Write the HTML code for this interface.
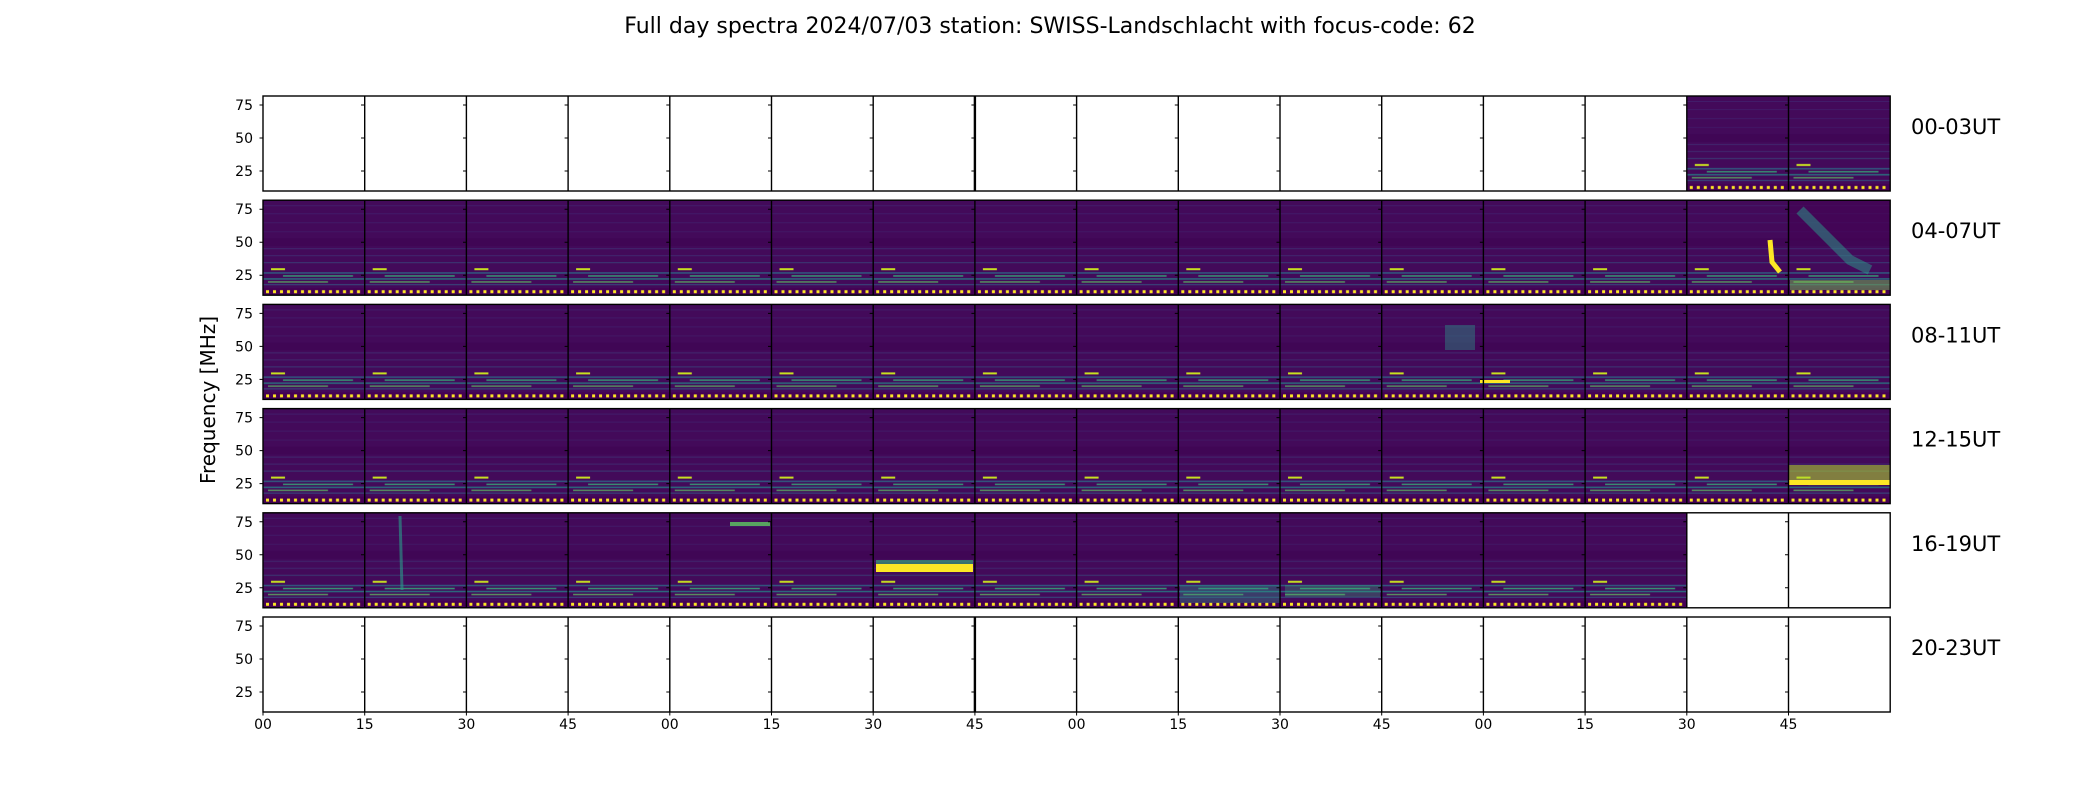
<!DOCTYPE html>
<html><head><meta charset="utf-8"><style>
html,body{margin:0;padding:0;background:#fff}
svg{display:block}
text{font-family:"DejaVu Sans","Liberation Sans",sans-serif;fill:#000}
</style></head><body>
<svg width="2100" height="800" viewBox="0 0 2100 800" xmlns="http://www.w3.org/2000/svg">
<defs>
<pattern id="sp" patternUnits="userSpaceOnUse" x="263" y="96" width="101.7" height="104.2">
 <rect width="101.7" height="95" fill="#430a5a"/>
 <rect y="5" width="101.7" height="1" fill="#3f3d85" opacity="0.35"/>
 <rect y="13" width="101.7" height="1" fill="#3f3d85" opacity="0.3"/>
 <rect y="22" width="101.7" height="1" fill="#3f3d85" opacity="0.3"/>
 <rect y="31" width="101.7" height="1" fill="#3f3d85" opacity="0.25"/>
 <rect y="38" width="101.7" height="8" fill="#3e0452" opacity="0.6"/>
 <rect y="48" width="101.7" height="1" fill="#3b528b" opacity="0.4"/>
 <rect y="55" width="101.7" height="1" fill="#3b528b" opacity="0.4"/>
 <rect y="62" width="101.7" height="1" fill="#31688e" opacity="0.5"/>
 <rect x="8" y="68" width="14" height="2" fill="#c8e020"/>
 <rect y="72" width="101.7" height="1.5" fill="#2a788e" opacity="0.7"/>
 <rect x="20" y="75" width="70" height="1.5" fill="#35b779" opacity="0.8"/>
 <rect y="78" width="101.7" height="1.5" fill="#21918c" opacity="0.7"/>
 <rect x="5" y="81" width="60" height="1.5" fill="#5ec962" opacity="0.7"/>
 <rect y="84" width="101.7" height="1" fill="#31688e" opacity="0.7"/>
 <rect y="88" width="101.7" height="7" fill="#440154"/>
 <rect x="3" y="90" width="3" height="3" fill="#fde725"/><rect x="10" y="90" width="3" height="3" fill="#fde725"/>
 <rect x="17" y="90" width="3" height="3" fill="#fde725"/><rect x="24" y="90" width="3" height="3" fill="#fde725"/>
 <rect x="31" y="90" width="3" height="3" fill="#fde725"/><rect x="38" y="90" width="3" height="3" fill="#fde725"/>
 <rect x="45" y="90" width="3" height="3" fill="#fde725"/><rect x="52" y="90" width="3" height="3" fill="#fde725"/>
 <rect x="59" y="90" width="3" height="3" fill="#fde725"/><rect x="66" y="90" width="3" height="3" fill="#fde725"/>
 <rect x="73" y="90" width="3" height="3" fill="#fde725"/><rect x="80" y="90" width="3" height="3" fill="#fde725"/>
 <rect x="87" y="90" width="3" height="3" fill="#fde725"/><rect x="94" y="90" width="3" height="3" fill="#fde725"/>
</pattern>
</defs>

<text x="1050" y="33" font-size="22" text-anchor="middle">Full day spectra 2024/07/03 station: SWISS-Landschlacht with focus-code: 62</text>
<text transform="translate(215,400) rotate(-90)" font-size="20" text-anchor="middle">Frequency [MHz]</text>

<rect x="1686.8" y="96" width="203.4" height="95" fill="url(#sp)"/>
<rect x="263" y="200.2" width="1627.2" height="95" fill="url(#sp)"/>
<rect x="263" y="304.4" width="1627.2" height="95" fill="url(#sp)"/>
<rect x="263" y="408.6" width="1627.2" height="95" fill="url(#sp)"/>
<rect x="263" y="512.8" width="1423.8" height="95" fill="url(#sp)"/>

<rect x="1788.5" y="200.2" width="101.7" height="40" fill="#440154" opacity="0.6"/>
<path d="M1800 210 L1830 240 L1850 260 L1870 270" stroke="#2a9d8a" stroke-width="10" fill="none" opacity="0.5"/>
<path d="M1770 240 L1772 262 L1780 272" stroke="#fde725" stroke-width="5" fill="none"/>
<rect x="1790" y="280" width="100" height="10" fill="#7ad151" opacity="0.45"/>
<rect x="1788.5" y="465" width="101.7" height="20" fill="#b5de2b" opacity="0.55"/>
<rect x="1788.5" y="480" width="101.7" height="5" fill="#fde725"/>
<rect x="1445" y="325" width="30" height="25" fill="#2a9d8a" opacity="0.4"/>
<rect x="876" y="564" width="97" height="8" fill="#fde725"/>
<rect x="876" y="560" width="97" height="4" fill="#35b779" opacity="0.6"/>
<rect x="730" y="522" width="40" height="4" fill="#5ec962" opacity="0.8"/>
<rect x="1480" y="380" width="30" height="3" fill="#fde725"/>
<path d="M400 516 L402 590" stroke="#2a9d8a" stroke-width="3" opacity="0.6"/>
<rect x="1180" y="585" width="100" height="18" fill="#2a9d8a" opacity="0.35"/>
<rect x="1285" y="585" width="95" height="12" fill="#35b779" opacity="0.3"/>

<g fill="none" stroke="#000" stroke-width="1.4">
 <rect x="263" y="96" width="1627.2" height="95"/>
 <rect x="263" y="200.2" width="1627.2" height="95"/>
 <rect x="263" y="304.4" width="1627.2" height="95"/>
 <rect x="263" y="408.6" width="1627.2" height="95"/>
 <rect x="263" y="512.8" width="1627.2" height="95"/>
 <rect x="263" y="617" width="1627.2" height="95"/>
</g>
<g stroke="#000" stroke-width="1.4">
 <path id="cl" d="M364.7 96V191M466.4 96V191M568.1 96V191M669.8 96V191M771.5 96V191M873.2 96V191M974.9 96V191M1076.6 96V191M1178.3 96V191M1280 96V191M1381.7 96V191M1483.4 96V191M1585.1 96V191M1686.8 96V191M1788.5 96V191"/>
 <use href="#cl" y="104.2"/><use href="#cl" y="208.4"/><use href="#cl" y="312.6"/><use href="#cl" y="416.8"/><use href="#cl" y="521"/>
 <path d="M974.9 96V191M974.9 617V712" stroke-width="2.4"/>
</g>

<g stroke="#000" stroke-width="1">
 <path id="tk" d="M259.5 105H263M259.5 138H263M259.5 171H263"/>
 <path id="tkr" d="M361 105H364.7M361 138H364.7M361 171H364.7M463 105H466.4M463 138H466.4M463 171H466.4M564.6 105H568.1M564.6 138H568.1M564.6 171H568.1M666.3 105H669.8M666.3 138H669.8M666.3 171H669.8M768 105H771.5M768 138H771.5M768 171H771.5M869.7 105H873.2M869.7 138H873.2M869.7 171H873.2M971.4 105H974.9M971.4 138H974.9M971.4 171H974.9M1073.1 105H1076.6M1073.1 138H1076.6M1073.1 171H1076.6M1174.8 105H1178.3M1174.8 138H1178.3M1174.8 171H1178.3M1276.5 105H1280M1276.5 138H1280M1276.5 171H1280M1378.2 105H1381.7M1378.2 138H1381.7M1378.2 171H1381.7M1479.9 105H1483.4M1479.9 138H1483.4M1479.9 171H1483.4M1581.6 105H1585.1M1581.6 138H1585.1M1581.6 171H1585.1M1683.3 105H1686.8M1683.3 138H1686.8M1683.3 171H1686.8M1785 105H1788.5M1785 138H1788.5M1785 171H1788.5"/>
 <use href="#tk" y="104.2"/><use href="#tk" y="208.4"/><use href="#tk" y="312.6"/><use href="#tk" y="416.8"/><use href="#tk" y="521"/>
 <use href="#tkr" y="104.2"/><use href="#tkr" y="208.4"/><use href="#tkr" y="312.6"/><use href="#tkr" y="416.8"/><use href="#tkr" y="521"/>
</g>

<g font-size="14" text-anchor="end">
 <text x="253" y="110">75</text><text x="253" y="143">50</text><text x="253" y="176">25</text>
 <text x="253" y="214.2">75</text><text x="253" y="247.2">50</text><text x="253" y="280.2">25</text>
 <text x="253" y="318.4">75</text><text x="253" y="351.4">50</text><text x="253" y="384.4">25</text>
 <text x="253" y="422.6">75</text><text x="253" y="455.6">50</text><text x="253" y="488.6">25</text>
 <text x="253" y="526.8">75</text><text x="253" y="559.8">50</text><text x="253" y="592.8">25</text>
 <text x="253" y="631">75</text><text x="253" y="664">50</text><text x="253" y="697">25</text>
</g>

<g stroke="#000" stroke-width="1">
 <path d="M263 712V715.5M364.7 712V715.5M466.4 712V715.5M568.1 712V715.5M669.8 712V715.5M771.5 712V715.5M873.2 712V715.5M974.9 712V715.5M1076.6 712V715.5M1178.3 712V715.5M1280 712V715.5M1381.7 712V715.5M1483.4 712V715.5M1585.1 712V715.5M1686.8 712V715.5M1788.5 712V715.5"/>
</g>
<g font-size="14" text-anchor="middle">
 <text x="263" y="729">00</text><text x="364.7" y="729">15</text><text x="466.4" y="729">30</text><text x="568.1" y="729">45</text>
 <text x="669.8" y="729">00</text><text x="771.5" y="729">15</text><text x="873.2" y="729">30</text><text x="974.9" y="729">45</text>
 <text x="1076.6" y="729">00</text><text x="1178.3" y="729">15</text><text x="1280" y="729">30</text><text x="1381.7" y="729">45</text>
 <text x="1483.4" y="729">00</text><text x="1585.1" y="729">15</text><text x="1686.8" y="729">30</text><text x="1788.5" y="729">45</text>
</g>

<g font-size="21">
 <text x="1911" y="134">00-03UT</text>
 <text x="1911" y="238.2">04-07UT</text>
 <text x="1911" y="342.4">08-11UT</text>
 <text x="1911" y="446.6">12-15UT</text>
 <text x="1911" y="550.8">16-19UT</text>
 <text x="1911" y="655">20-23UT</text>
</g>
</svg>
</body></html>
